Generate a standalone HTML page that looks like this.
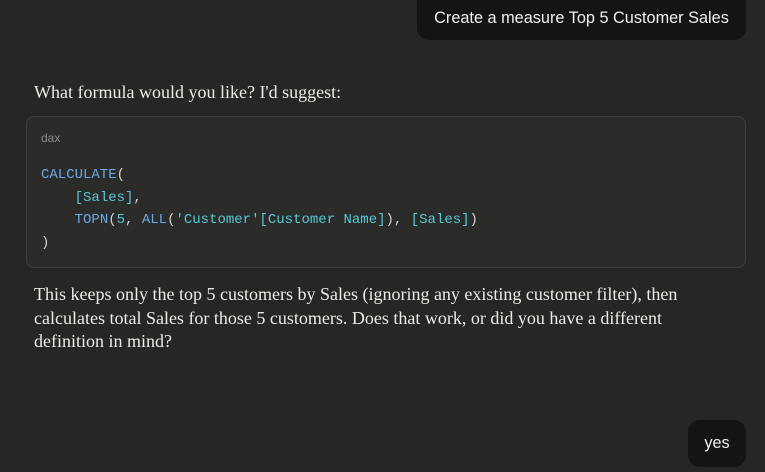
<!DOCTYPE html>
<html><head><meta charset="utf-8"><style>
html,body{margin:0;padding:0;background:#262624;width:765px;height:472px;overflow:hidden;}
.b{position:absolute;background:#141413;color:#f0efea;font:16.3px "Liberation Sans",sans-serif;border-radius:12px;}
.t{position:absolute;left:34px;color:#ecebe4;font:18px/23.5px "Liberation Serif",serif;width:680px;}
.code{position:absolute;left:26px;top:116px;width:720px;height:152px;background:#2b2b29;border:1px solid #3e3e3b;border-radius:8px;box-sizing:border-box;}
.lang{position:absolute;left:14px;top:14px;font:12px "Liberation Sans",sans-serif;color:#8e8c86;}
pre{position:absolute;left:14px;top:47px;margin:0;font:14px/22.7px "Liberation Mono",monospace;color:#d6d4cd;}
.k{color:#6aa8e8}.s{color:#56c8d4}
</style></head><body>
<div class="b" style="left:417px;top:0;width:329px;height:40px;border-radius:0 0 12px 12px;line-height:36px;text-align:center;">Create a measure Top 5 Customer Sales</div>
<div class="t" style="top:81px;">What formula would you like? I'd suggest:</div>
<div class="code"><div class="lang">dax</div>
<pre><span class="k">CALCULATE</span>(
    <span class="s">[Sales]</span>,
    <span class="k">TOPN</span>(<span class="s">5</span>, <span class="k">ALL</span>(<span class="s">'Customer'[Customer Name]</span>), <span class="s">[Sales]</span>)
)</pre></div>
<div class="t" style="top:283px;">This keeps only the top 5 customers by Sales (ignoring any existing customer filter), then calculates total Sales for those 5 customers. Does that work, or did you have a different definition in mind?</div>
<div class="b" style="left:688px;top:420px;width:58px;height:47px;line-height:47px;text-align:center;">yes</div>
</body></html>
